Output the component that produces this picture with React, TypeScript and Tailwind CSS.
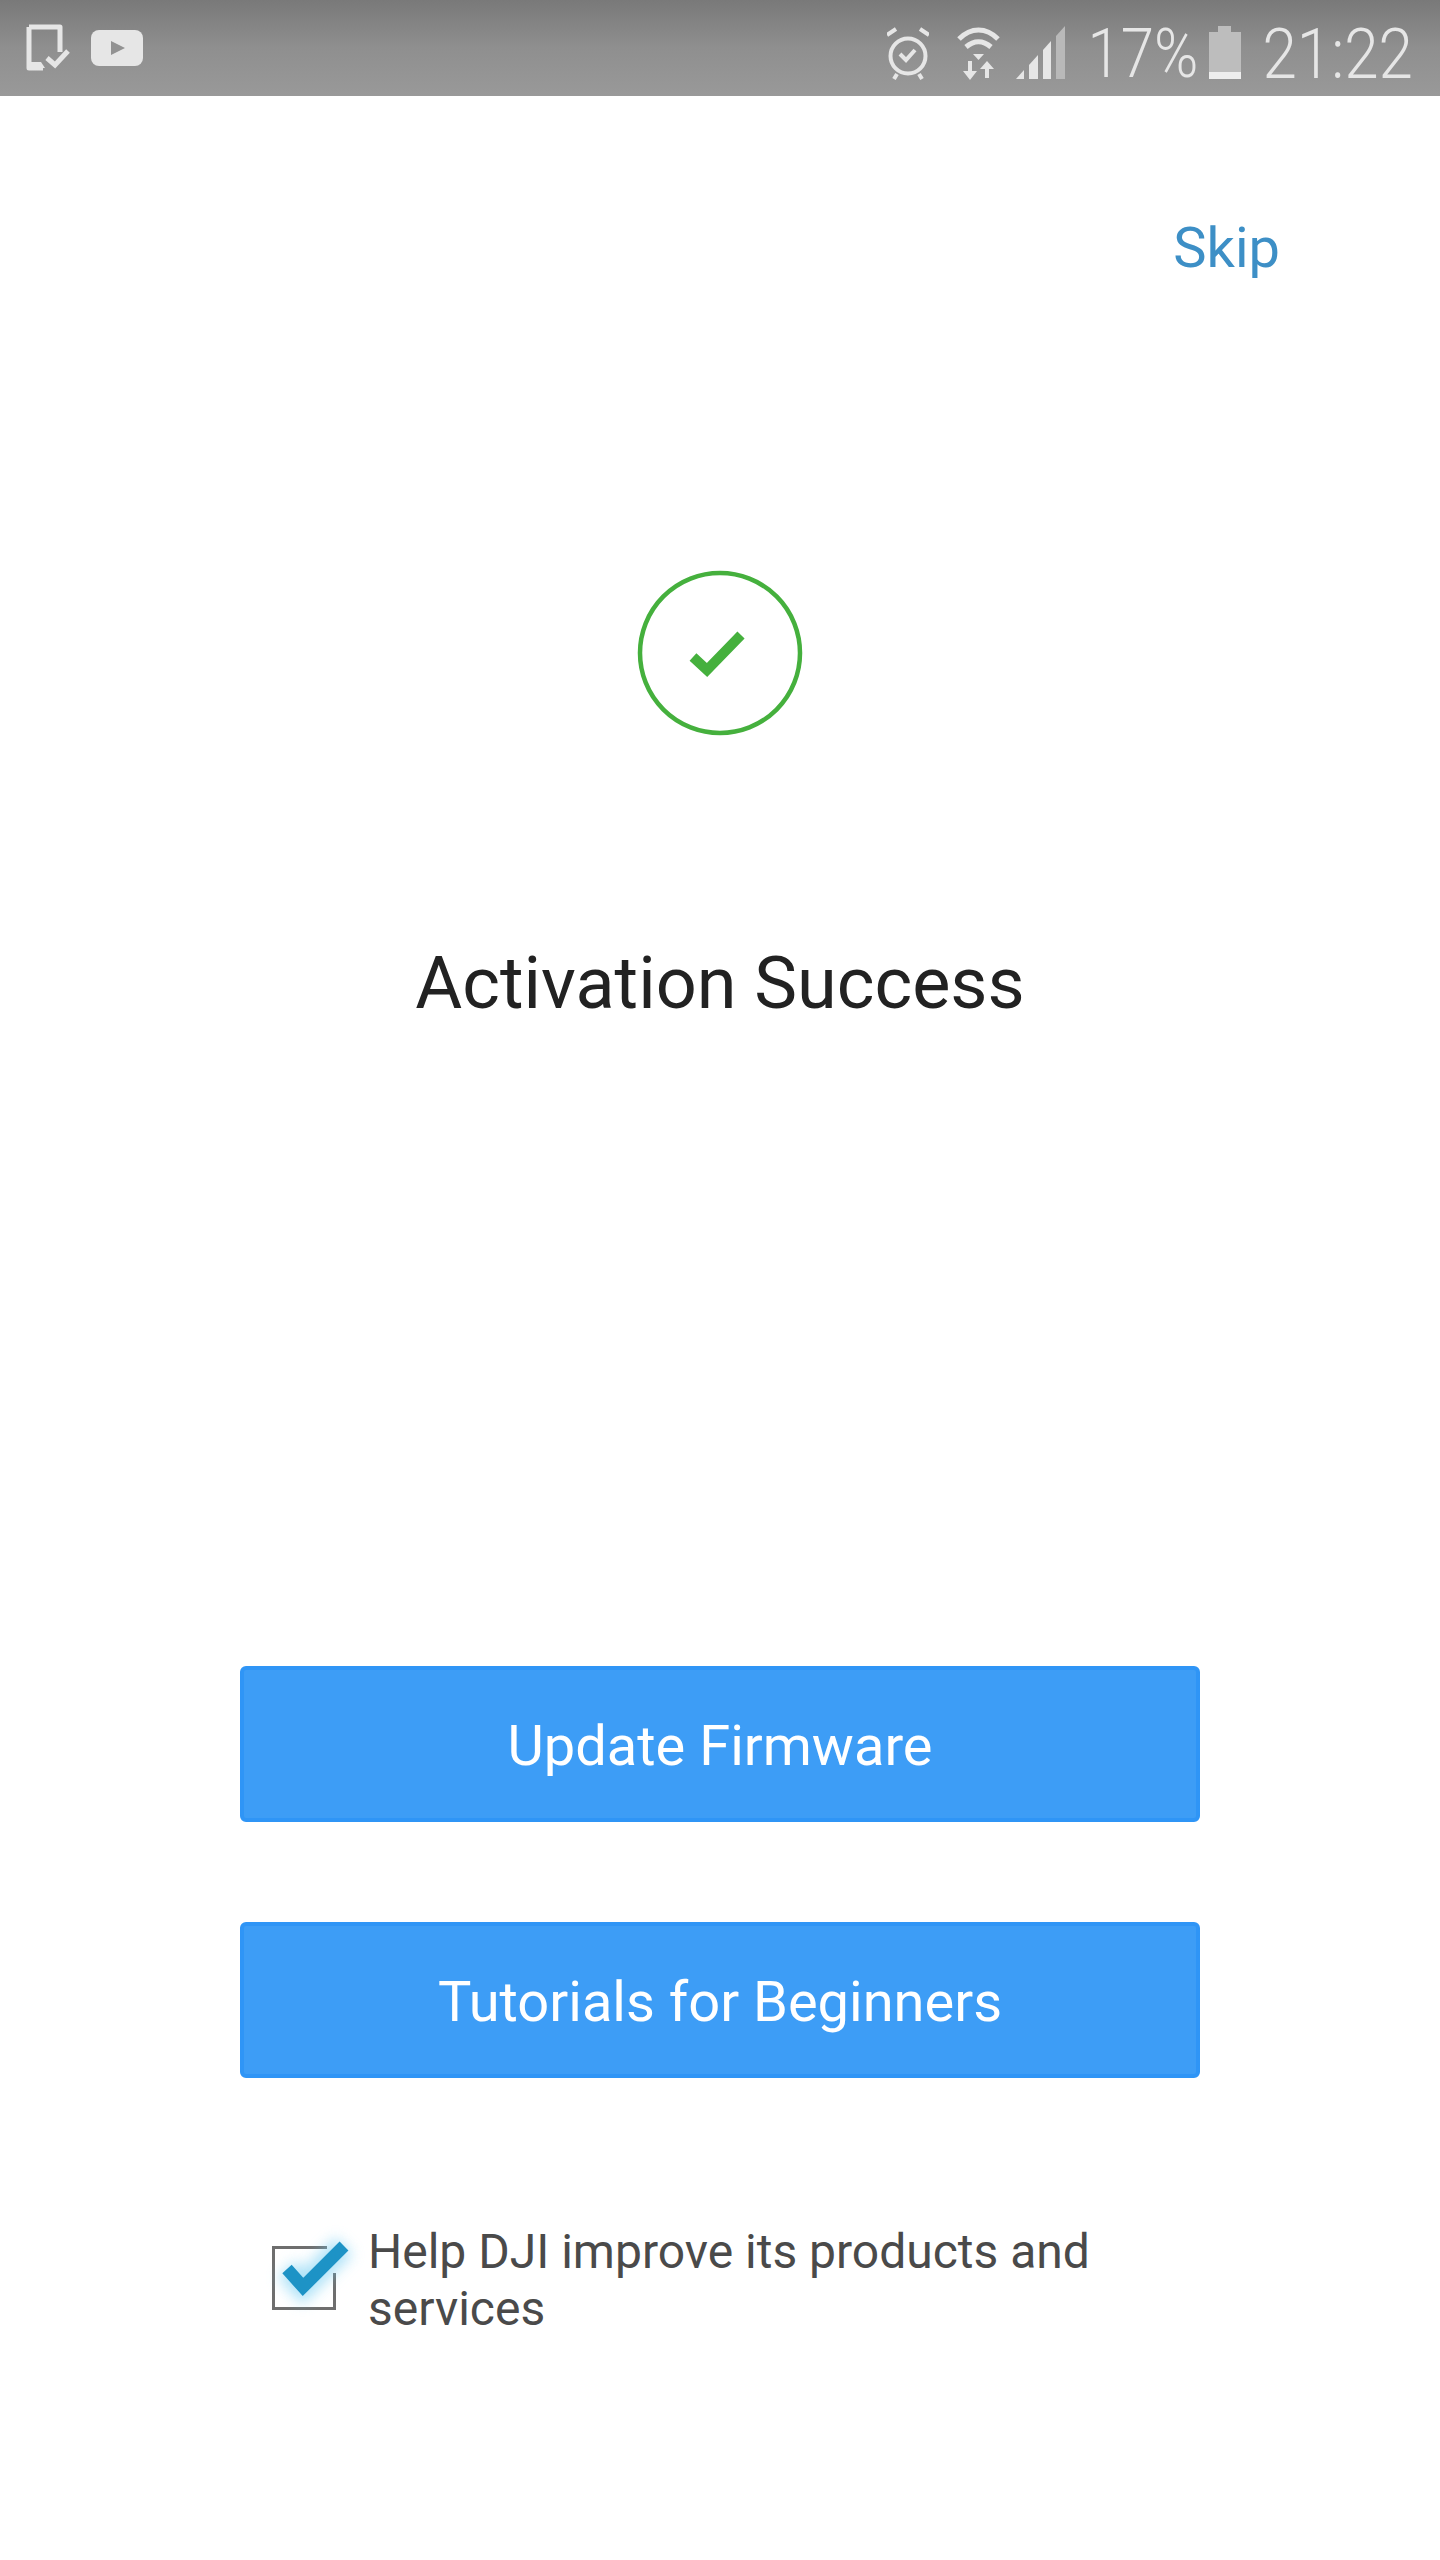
import React from 'react';

const font = { fontFamily: 'Roboto, "Noto Sans", sans-serif' };

function StatusBar() {
  return (
    <div className="flex h-[96px] items-start justify-between bg-gradient-to-b from-[#797979] via-[#8f8f8f] to-[#999999] px-[26px]">
      <div className="flex items-start gap-[21px] pt-[24px]">
        <svg width="44" height="48" viewBox="0 0 44 48" fill="none">
          <path d="M3 3h31v25M3 3v41h14" stroke="#e6e6e6" strokeWidth="5" strokeLinejoin="round" />
          <path d="M4 38h11l4 6H4z" fill="#e6e6e6" />
          <path d="M21 34l8 7 13-14" stroke="#e6e6e6" strokeWidth="5" />
        </svg>
        <svg width="52" height="36" viewBox="0 0 52 36" className="mt-[6px]">
          <rect width="52" height="36" rx="8" fill="#e6e6e6" />
          <path d="M20 11l14 7-14 7z" fill="#929292" />
        </svg>
      </div>
      <div className="flex items-start pt-[26px] pr-[1px] text-[#e6e6e6]">
        <svg width="42" height="54" viewBox="0 0 42 54" fill="none">
          <circle cx="21" cy="30" r="17.5" stroke="#e6e6e6" strokeWidth="4" />
          <path d="M13 28l6 6 9-10" stroke="#e6e6e6" strokeWidth="4" />
          <path d="M0 9l9-6M42 9l-9-6M7 53l3-5M35 53l-3-5" stroke="#e6e6e6" strokeWidth="4" />
        </svg>
        <svg width="43" height="54" viewBox="0 0 43 54" fill="none" className="ml-[28px]">
          <path d="M2 13c12-12 27-12 39 0" stroke="#e6e6e6" strokeWidth="5" />
          <path d="M9 21c8-7 17-7 25 0" stroke="#e6e6e6" strokeWidth="5" />
          <path d="M16 28h11l-5.500 6z" fill="#e6e6e6" />
          <path d="M13 54l-7-9h5V35h4v10h5zM30 35l7 8h-5v9h-4v-9h-5z" fill="#e6e6e6" />
        </svg>
        <svg width="49" height="54" viewBox="0 0 49 54" className="ml-[16px]">
          <path d="M0 53l8-9v9z" fill="#e6e6e6" />
          <path d="M13 39l9-10v24h-9z" fill="#e6e6e6" />
          <path d="M27 24l8-9v38h-8z" fill="#e6e6e6" />
          <path d="M40 10l9-10v53h-9z" fill="#b9b9b9" />
        </svg>
        <span className="ml-[22px] mt-[1px] inline-block w-[108px] scale-y-[1.13] text-[60px] leading-[54px] font-light" style={font}>
          17%
        </span>
        <svg width="32" height="53" viewBox="0 0 32 53" className="ml-[14px]">
          <path d="M0 6h9V0h13v6h10v40H0z" fill="#bdbdbd" />
          <rect y="46" width="32" height="7" fill="#eeeeee" />
        </svg>
        <span className="ml-[21px] mt-[1px] inline-block scale-y-[1.13] text-[62px] leading-[54px] font-light" style={font}>
          21:22
        </span>
      </div>
    </div>
  );
}

function ActionButton({ label }: { label: string }) {
  return (
    <button className="flex h-[156px] w-full items-center justify-center rounded-[6px] border-4 border-[#2f95f6] bg-[#3d9df6] pt-[4px] text-[56px] text-white">
      {label}
    </button>
  );
}

export default function App() {
  return (
    <div className="h-[2560px] w-[1440px] bg-white" style={font}>
      <StatusBar />

      <div className="flex justify-end pt-[120px] pr-[160px]">
        <span className="text-[56px] leading-[64px] text-[#3d8fc6]">Skip</span>
      </div>

      <div className="mt-[290px] flex justify-center">
        <svg width="166" height="166" viewBox="0 0 166 166" fill="none">
          <circle cx="83" cy="83" r="80" stroke="#45b03d" strokeWidth="4.500" />
          <path d="M56 87l14 13 34-35" stroke="#45b03d" strokeWidth="10" />
        </svg>
      </div>

      <h1 className="mt-[206px] text-center text-[72px] leading-[84px] font-normal text-[#222222]">
        Activation Success
      </h1>

      <div className="mt-[640px] flex flex-col gap-[100px] px-[240px]">
        <ActionButton label="Update Firmware" />
        <ActionButton label="Tutorials for Beginners" />
      </div>

      <div className="mt-[145px] flex items-start pl-[272px] pr-[240px]">
        <div className="relative mt-[23px] h-[64px] w-[64px] shrink-0 border-[3px] border-[#6e6e6e]">
          <div className="absolute top-[-3px] right-[-3px] h-[3px] w-[9px] bg-white" />
          <div className="absolute top-[-3px] right-[-3px] h-[27px] w-[3px] bg-white" />
          <svg width="64" height="64" viewBox="0 0 64 64" fill="none" className="absolute top-[-3px] left-[-3px] overflow-visible">
            <path d="M15 23l16 18 41-41" stroke="#6ccbf2" strokeWidth="24" opacity="0.55" className="blur-[7px]" />
            <path d="M15 23l16 18 41-41" stroke="#1d93c6" strokeWidth="12.500" />
          </svg>
        </div>
        <p className="ml-[32px] text-[48px] leading-[57px] text-[#4a4a4a]">
          Help DJI improve its products and services
        </p>
      </div>
    </div>
  );
}
